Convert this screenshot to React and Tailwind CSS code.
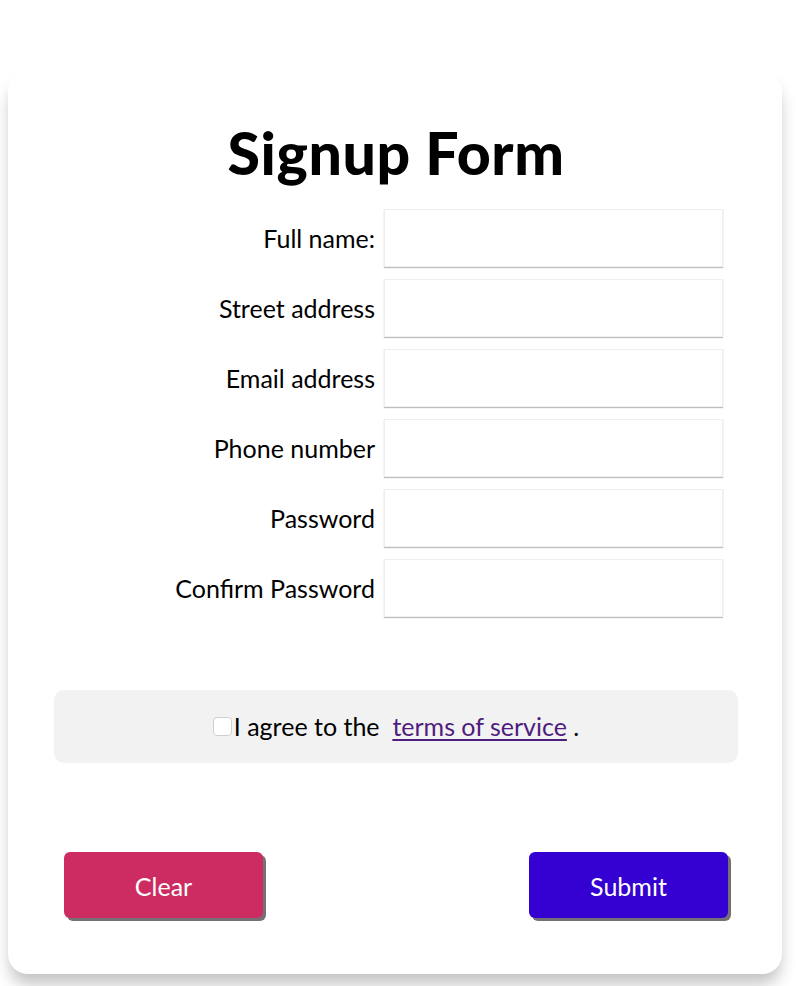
export default function App() {
  const fields = [
    'Full name:',
    'Street address',
    'Email address',
    'Phone number',
    'Password',
    'Confirm Password',
  ];

  return (
    <div className="min-h-[986px] bg-white pt-[72px] font-['Lato',sans-serif] text-black">
      <div className="ml-2 w-[774px] rounded-[20px] bg-white pt-[46px] pb-[56px] shadow-[0_12px_16px_-2px_rgba(0,0,0,0.24)]">
        <h1 className="mb-[22px] text-center text-[59px] leading-[69px] font-black tracking-[0.6px] pl-[2px]">
          Signup Form
        </h1>

        {/* form rows */}
        <div className="flex flex-col gap-3">
          {fields.map((label) => (
            <div key={label} className="flex items-center">
              <label className="w-[376px] pr-[9px] text-right text-[25px] leading-none">
                {label}
              </label>
              <input
                type={label.includes('Password') ? 'password' : 'text'}
                className="h-[58px] w-[339px] border border-[#efefef] bg-white shadow-[0_1px_1px_rgba(0,0,0,0.25)] outline-none"
              />
            </div>
          ))}
        </div>

        {/* terms */}
        <div className="ml-[46px] mr-[44px] mt-[73px] flex h-[73px] items-center justify-center rounded-[10px] bg-[#f2f2f3] text-[25px]">
          <input
            type="checkbox"
            className="mr-[2px] h-[19px] w-[19px] appearance-none rounded-[4px] border border-[#cfcfcf] bg-white"
          />
          <span>I agree to the&nbsp;&nbsp;</span>
          <a href="#" className="text-[#4e1d7d] underline underline-offset-[3px]">
            terms of service
          </a>
          <span>&nbsp;.</span>
        </div>

        {/* buttons */}
        <div className="mt-[89px] flex justify-between pl-[56px] pr-[54px]">
          <button className="h-[66px] w-[199px] rounded-[6px] bg-[#cc2c62] pt-[4px] text-[25px] text-white shadow-[3px_3px_0_rgba(60,50,60,0.7)]">
            Clear
          </button>
          <button className="h-[66px] w-[199px] rounded-[6px] bg-[#3401d2] pt-[4px] text-[25px] text-white shadow-[3px_3px_0_rgba(60,50,60,0.7)]">
            Submit
          </button>
        </div>
      </div>
    </div>
  );
}
